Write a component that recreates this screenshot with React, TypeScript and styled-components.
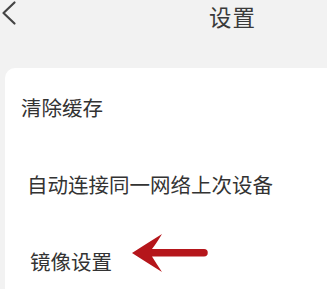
import styled, { createGlobalStyle } from "styled-components";

const GlobalStyle = createGlobalStyle`
    html, body {
        margin: 0;
        padding: 0;
        background: #f2f2f2;
        overflow: hidden;
    }
    body {
        font-family: "Noto Sans CJK SC", "Noto Sans", sans-serif;
        color: #333;
    }
`

const Page = styled.div`
    width: 327px;
    height: 289px;
    display: flex;
    flex-direction: column;
`

const Header = styled.div`
    height: 32px;
    display: flex;
    align-items: flex-start;
`

const BackButton = styled.div`
    width: 18px;
    height: 27px;
    display: flex;
    align-items: flex-start;
`

const Title = styled.div`
    margin-left: auto;
    margin-right: 71px;
    font-size: 22.5px;
    line-height: 32px;
    color: #3a3a3a;
    letter-spacing: 1px;
`

const Card = styled.div`
    margin: 36px 0 0 5px;
    flex: 1;
    background: #fff;
    border-top-left-radius: 10px;
    display: flex;
    flex-direction: column;
`

const Row = styled.div<{ $indent: number }>`
    height: 77px;
    display: flex;
    align-items: center;
    padding-left: ${p => p.$indent}px;
    font-size: 20.5px;
    color: #333;
`

const Arrow = styled.svg`
    margin-left: 18px;
    margin-bottom: 15px;
    flex: none;
`

export default function App() {
    return (
        <Page>
            <GlobalStyle />
            <Header>
                <BackButton>
                    <svg width="18" height="27" viewBox="0 0 18 27">
                        <polyline points="14.5,2.5 3.5,13 14.5,23.5" fill="none" stroke="#444" strokeWidth="2.2" strokeLinecap="round" strokeLinejoin="round" />
                    </svg>
                </BackButton>
                <Title>设置</Title>
            </Header>
            <Card>
                <Row $indent={16}>清除缓存</Row>
                <Row $indent={22}>自动连接同一网络上次设备</Row>
                <Row $indent={25}>
                    镜像设置
                    <Arrow width="78" height="42" viewBox="0 0 78 42">
                        <path d="M2 21 Q16 12 32 2 Q26 12 22 17 L74 17 A3.75 3.75 0 0 1 74 24.5 L22 24.5 Q26 31 32 40 Q16 30 2 21 Z" fill="#b5161b" />
                    </Arrow>
                </Row>
            </Card>
        </Page>
    )
}
